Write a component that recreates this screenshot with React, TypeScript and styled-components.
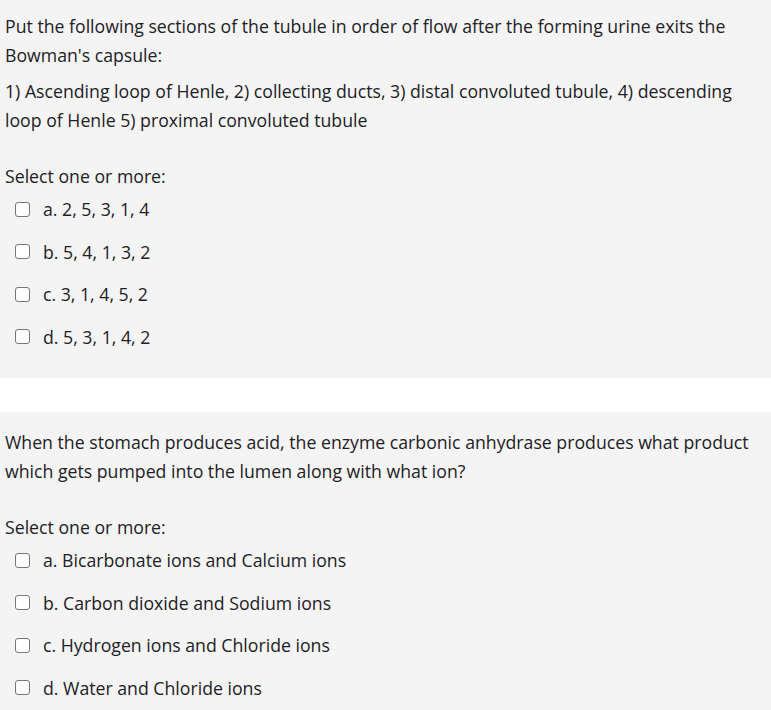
import React from 'react'
import styled, { createGlobalStyle } from 'styled-components'

const Global = createGlobalStyle`
  html, body { margin: 0; padding: 0; background: #fff; }
  body { font-family: "Open Sans", "Noto Sans", sans-serif; color: #1d2125; }
`

// the first panel is cut off a little at the top of the shot
const Page = styled.div`
  display: flex;
  flex-direction: column;
  gap: 34px;
  margin-top: -4px;
`

const Panel = styled.section`
  background: #f4f4f4;
  padding: 16px 5px 27px;
  font-size: 17.7px;
  line-height: 28.5px;
`

const Para = styled.p`
  margin: 0 0 8px;
`

const Prompt = styled.div`
  margin-top: 27.5px;
  margin-bottom: 5px;
`

const Options = styled.div`
  display: flex;
  flex-direction: column;
  gap: 14px;
  padding-left: 10px;
`

const Option = styled.label`
  display: flex;
  align-items: center;
  gap: 13px;
`

const Box = styled.span`
  width: 13px;
  height: 13px;
  border: 1px solid #767676;
  border-radius: 3px;
  background: #fff;
  flex: none;
`

type Q = { text: string[]; options: string[] }

const questions: Q[] = [
  {
    text: [
      "Put the following sections of the tubule in order of flow after the forming urine exits the Bowman's capsule:",
      '1) Ascending loop of Henle, 2) collecting ducts, 3) distal convoluted tubule, 4) descending loop of Henle 5) proximal convoluted tubule',
    ],
    options: ['a. 2, 5, 3, 1, 4', 'b. 5, 4, 1, 3, 2', 'c. 3, 1, 4, 5, 2', 'd. 5, 3, 1, 4, 2'],
  },
  {
    text: [
      'When the stomach produces acid, the enzyme carbonic anhydrase produces what product which gets pumped into the lumen along with what ion?',
    ],
    options: [
      'a. Bicarbonate ions and Calcium ions',
      'b. Carbon dioxide and Sodium ions',
      'c. Hydrogen ions and Chloride ions',
      'd. Water and Chloride ions',
    ],
  },
]

export default function App() {
  return (
    <Page>
      <Global />
      {questions.map((q, i) => (
        <Panel key={i}>
          {q.text.map((t, j) => (
            <Para key={j}>{t}</Para>
          ))}
          <Prompt>Select one or more:</Prompt>
          <Options>
            {q.options.map((o) => (
              <Option key={o}>
                <Box />
                <span>{o}</span>
              </Option>
            ))}
          </Options>
        </Panel>
      ))}
    </Page>
  )
}
